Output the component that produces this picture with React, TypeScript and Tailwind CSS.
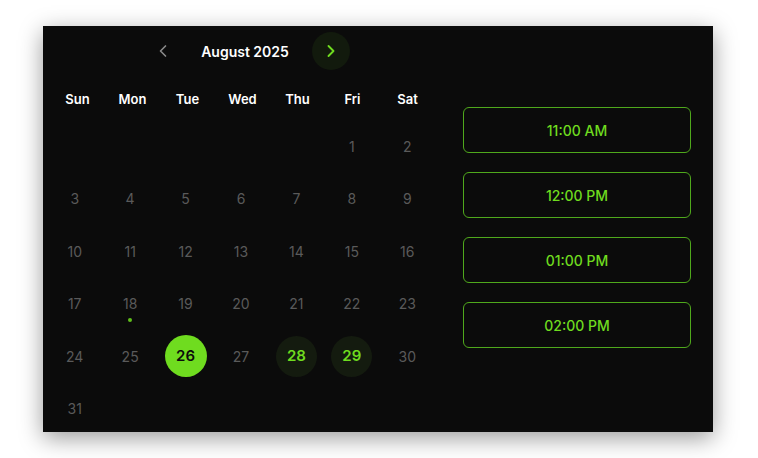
import { ChevronLeft, ChevronRight } from 'lucide-react';

const weekdays = ['Sun', 'Mon', 'Tue', 'Wed', 'Thu', 'Fri', 'Sat'];
const slots = ['11:00 AM', '12:00 PM', '01:00 PM', '02:00 PM'];

// August 2025 starts on a Friday
const leading = 5;
const daysInMonth = 31;
const selected = 26;
const available = [28, 29];
const today = 18;

function DayCell({ day }: { day: number | null }) {
  if (day === null) return <div className="h-[52.5px]" />;

  const isSelected = day === selected;
  const isAvailable = available.includes(day);

  return (
    <div className="relative flex h-[52.5px] items-center justify-center">
      {isSelected ? (
        <div className="flex h-[42px] w-[42px] items-center justify-center rounded-full bg-[#6fdc1f] text-[15px] font-semibold text-[#0b0b0b]">
          {day}
        </div>
      ) : isAvailable ? (
        <div className="flex h-[41px] w-[41px] items-center justify-center rounded-full bg-[#141b0f] text-[15px] font-semibold text-[#6fdc1f]">
          {day}
        </div>
      ) : (
        <span className="text-[14px] text-[#5a5a5a]">{day}</span>
      )}
      {day === today && (
        <span className="absolute left-1/2 top-[40px] h-[4px] w-[4px] -translate-x-1/2 rounded-full bg-[#5fbf1a]" />
      )}
    </div>
  );
}

export default function App() {
  const cells: (number | null)[] = [
    ...Array.from({ length: leading }, () => null),
    ...Array.from({ length: daysInMonth }, (_, i) => i + 1),
  ];

  return (
    <div className="min-h-[458px] bg-white pl-[43px] pt-[26px] font-['Inter',sans-serif]">
      <div className="flex h-[406px] w-[670px] bg-[#0b0b0b] shadow-[0_6px_22px_rgba(0,0,0,0.4)]">
        {/* Calendar */}
        <div className="w-[392px] pl-[4px] pt-[6px]">
          <div className="flex items-center justify-center pl-[12px]">
            <button className="flex h-[38px] w-[38px] items-center justify-center text-[#8a8a8a]">
              <ChevronLeft className="h-[20px] w-[20px]" strokeWidth={2} />
            </button>
            <span className="ml-[19px] mr-[23px] whitespace-nowrap text-[14px] font-semibold text-white">
              August 2025
            </span>
            <button className="flex h-[38px] w-[38px] items-center justify-center rounded-full bg-[#121a0d] text-[#6fdc1f]">
              <ChevronRight className="h-[20px] w-[20px]" strokeWidth={2.25} />
            </button>
          </div>

          <div className="mt-[20px] grid w-[388px] grid-cols-7 pl-[3px]">
            {weekdays.map((d) => (
              <div key={d} className="flex h-[20px] items-center justify-center text-[13px] font-semibold text-white">
                {d}
              </div>
            ))}
          </div>

          <div className="mt-[10px] grid w-[388px] grid-cols-7">
            {cells.map((day, i) => (
              <DayCell key={i} day={day} />
            ))}
          </div>
        </div>

        {/* Time slots */}
        <div className="ml-[28px] flex w-[228px] flex-col gap-[19px] pt-[81px]">
          {slots.map((s) => (
            <button
              key={s}
              className="flex h-[46px] items-center justify-center rounded-[6px] border border-[#4fa81c] text-[14px] font-medium text-[#6fdc1f]"
            >
              {s}
            </button>
          ))}
        </div>
      </div>
    </div>
  );
}
